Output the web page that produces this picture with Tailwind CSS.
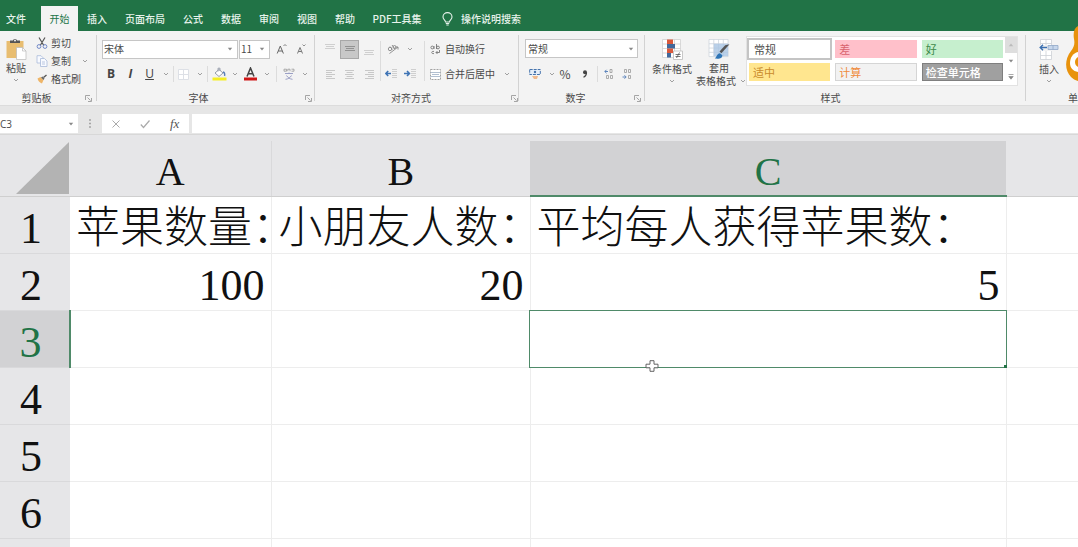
<!DOCTYPE html>
<html lang="zh-CN">
<head>
<meta charset="utf-8">
<meta name="viewport" content="width=device-width, initial-scale=1">
<title>Excel</title>
<script src="https://cdn.jsdelivr.net/npm/@tailwindcss/browser@4"></script>
</head>
<body class="relative flex h-screen flex-col overflow-hidden bg-white font-['Noto_Sans_CJK_SC',sans-serif] text-[10px] leading-[14px] text-[#4a4a4a]">

<svg class="hidden" aria-hidden="true">
  <symbol id="chev" viewBox="0 0 6 4"><path d="M1 1l2 2 2-2" fill="none" stroke="#a0a0a0"/></symbol>
  <symbol id="tri" viewBox="0 0 6 4"><path d="M.8 .8h4.4L3 3.4z" fill="#888"/></symbol>
  <symbol id="launch" viewBox="0 0 7 7"><path d="M.5 5V.5H5M2.500 2.500l3 3M6.500 3v3.500H3" fill="none" stroke="#9c9c9c" stroke-width=".9"/></symbol>
</svg>

<nav class="flex h-[31px] shrink-0 items-end whitespace-nowrap bg-[#217346] font-medium text-[#e8f3ec]" aria-label="功能区选项卡">
  <button class="h-[25px] w-[41px] pr-[9px]">文件</button>
  <button class="h-[25px] w-[37px] bg-[#f3f3f3] font-normal text-[#217346]">开始</button>
  <button class="h-[25px] w-[38px]">插入</button>
  <button class="h-[25px] w-[58px]">页面布局</button>
  <button class="h-[25px] w-[38px]">公式</button>
  <button class="h-[25px] w-[38px]">数据</button>
  <button class="h-[25px] w-[38px]">审阅</button>
  <button class="h-[25px] w-[38px]">视图</button>
  <button class="h-[25px] w-[38px]">帮助</button>
  <button class="h-[25px] w-[66px]">PDF工具集</button>
  <button class="ml-2 flex h-[25px] items-center gap-2 px-1">
    <svg class="h-[14px] w-[11px]" viewBox="0 0 11 14" fill="none" stroke="#e8f3ec" stroke-width="1.100"><path d="M3.500 10C3.500 8 1 7.500 1 4.900a4.500 4.300 0 0 1 9 0C10 7.500 7.500 8 7.500 10zM3.800 11.500h3.400M4.300 13h2.400"/></svg>
    操作说明搜索
  </button>
</nav>

<section class="flex h-[75px] shrink-0 whitespace-nowrap border-b border-[#dcdcdc] bg-[#f3f3f3]" aria-label="功能区">

  <div class="flex w-[96px] shrink-0 flex-col pt-[3px]">
    <div class="flex h-[54px]">
      <button class="flex w-8 flex-col items-center pt-1">
        <svg class="h-[22px] w-[22px]" viewBox="0 0 22 22"><path d="M1.500 3h17v17h-17z" fill="#e8bd70"/><path d="M5 5V2.500h3C8.300.5 11.700.5 12 2.500h3V5z" fill="#555"/><circle cx="10" cy="2.500" r="1" fill="#f3f3f3"/><path d="M11.500 9.500h6l3.500 3.500v8.500h-9.500z" fill="#fff" stroke="#b9b9b9" stroke-width=".7"/><path d="M17.500 9.500V13H21" fill="none" stroke="#b9b9b9" stroke-width=".7"/></svg>
        <span class="mt-px">粘贴</span>
        <svg class="mt-[3px] h-1 w-1.5"><use href="#chev"/></svg>
      </button>
      <div class="flex flex-col pl-1">
        <button class="flex h-[18px] items-center gap-[3px]">
          <svg class="h-3 w-3" viewBox="0 0 12 12" fill="none"><path d="M3 .5l4.800 8M9 .5L4.200 8.500" stroke="#555" stroke-width="1.200"/><circle cx="3" cy="9.500" r="1.900" stroke="#7188c8"/><circle cx="9" cy="9.500" r="1.900" stroke="#7188c8"/></svg>剪切
        </button>
        <button class="flex h-[18px] items-center gap-[3px]">
          <svg class="h-3 w-3" viewBox="0 0 12 12" fill="#f8faff" stroke="#a9bad9" stroke-width=".8"><path d="M1 .7h4l2 2V8H1z"/><path d="M4.500 3.500h4l2.500 2.500v5.500H4.500z"/><path d="M6 7h3M6 9h3"/></svg>复制<svg class="ml-2 h-1 w-1.5"><use href="#chev"/></svg>
        </button>
        <button class="flex h-[19px] items-center gap-[3px]">
          <svg class="h-3 w-3" viewBox="0 0 12 12"><path d="M1.500 5.500l3-1.500 3 3-1.500 3.500C4 10 2 8 1.500 5.500z" fill="#eeb568"/><path d="M5 4.500l1.500-1L8.500 5.500l-1 1.500z" fill="#666"/><path d="M7.500 4.500L10.500 2" stroke="#555" stroke-width="1.300"/></svg>格式刷
        </button>
      </div>
    </div>
    <div class="mt-[3px] flex items-center"><span class="w-[85px] pr-3 text-center">剪贴板</span><button aria-label="剪贴板设置"><svg class="h-[7px] w-[7px]"><use href="#launch"/></svg></button></div>
  </div>

  <div class="my-1 w-px shrink-0 bg-[#d2d2d2]"></div>
  <div class="flex w-[217px] shrink-0 flex-col pl-[5px] pt-2">
    <div class="flex h-5 items-center">
      <div class="flex h-[19px] w-[136px] items-center border border-[#c6c6c6] bg-white pr-1">
        <input aria-label="字体" class="w-full min-w-0 pl-px outline-none" value="宋体"><svg class="h-1 w-1.5 shrink-0"><use href="#tri"/></svg>
      </div>
      <div class="ml-px flex h-[19px] w-[31px] items-center border border-[#c6c6c6] bg-white pr-1">
        <input aria-label="字号" class="w-full min-w-0 pl-px outline-none" value="11"><svg class="h-1 w-1.5 shrink-0"><use href="#tri"/></svg>
      </div>
      <button aria-label="增大字号" class="ml-1.5 w-[14px]"><svg class="h-3 w-3" viewBox="0 0 12 12" fill="none" stroke="#666"><path d="M1.200 10.500L4.300 3l3.100 7.500M2.300 8h4"/><path d="M7.500 3L9 1.500 10.500 3" stroke-width=".8"/></svg></button>
      <button aria-label="减小字号" class="ml-1.5 w-[14px]"><svg class="h-3 w-3" viewBox="0 0 12 12" fill="none" stroke="#777"><path d="M1.500 10.500L4 4.500l2.500 6M2.400 8.500h3.200"/><path d="M6.500 1.500L8 3l1.500-1.500" stroke-width=".8"/></svg></button>
    </div>
    <div class="mt-[5px] flex h-5 items-center text-[12px] text-[#444]">
      <button class="w-[18px] font-['Open_Sans',sans-serif] font-bold">B</button>
      <button class="ml-px w-[19px] font-['Open_Sans',sans-serif] font-bold italic">I</button>
      <button class="w-[19px] font-['Open_Sans',sans-serif] underline">U</button>
      <button aria-label="下划线选项" class="w-[14px]"><svg class="ml-1 h-1 w-1.5"><use href="#chev"/></svg></button>
      <div class="h-4 w-px bg-[#dcdcdc]"></div>
      <button aria-label="边框" class="flex w-[33px] items-center justify-between pl-1 pr-1"><svg class="h-[11px] w-[11px]" viewBox="0 0 11 11"><path d="M.5.5h10v10H.5zM5.500.5v10M.5 5.500h10" fill="#fff" stroke="#dde0e6"/></svg><svg class="h-1 w-1.5"><use href="#chev"/></svg></button>
      <div class="h-4 w-px bg-[#dcdcdc]"></div>
      <button aria-label="填充颜色" class="flex w-[32px] items-center justify-between pl-1 pr-0.5"><svg class="h-[14px] w-[15px]" viewBox="0 0 15 14"><path d="M3 6l4-3.500L11 6 7 9.500z" fill="#fff" stroke="#8b93a3" stroke-width=".9"/><path d="M6 4.500V1.200h2V4" fill="none" stroke="#8b93a3" stroke-width=".8"/><path d="M11 5c2 .5 2 2 1.600 4" fill="none" stroke="#5a7fb8" stroke-width="1.300"/><path d="M.5 10.500h14v3H.5z" fill="#f5ee25"/></svg><svg class="h-1 w-1.5"><use href="#chev"/></svg></button>
      <button aria-label="字体颜色" class="flex w-[32px] items-center justify-between pl-1 pr-0.5"><svg class="h-[14px] w-[13px]" viewBox="0 0 13 14"><path d="M3 9.500L6.500 1 10 9.500M4.200 6.800h4.600" fill="none" stroke="#444" stroke-width="1.500"/><path d="M0 10.500h13v3H0z" fill="#cf1717"/></svg><svg class="h-1 w-1.5"><use href="#chev"/></svg></button>
      <div class="ml-1 h-4 w-px bg-[#dcdcdc]"></div>
      <button aria-label="拼音" class="flex w-[31px] items-center justify-between pl-1.5"><svg class="h-3 w-3" viewBox="0 0 12 12" fill="none"><path d="M1 1.200h2.500v2H1zM4.800 3.200v-2H7v2M8.500 1.200H11v2H8.500" stroke="#999" stroke-width=".8"/><path d="M2 5.500h8M6 4.500v1M3.500 7.500C5 10 7 11 9.500 11.300M8.500 7.500C7 10 5 11 2.500 11.300" stroke="#9ba0c5"/></svg><svg class="h-1 w-1.5"><use href="#chev"/></svg></button>
    </div>
    <div class="mt-[7px] flex items-center"><span class="w-[203px] pr-2.5 text-center">字体</span><button aria-label="字体设置"><svg class="h-[7px] w-[7px]"><use href="#launch"/></svg></button></div>
  </div>

  <div class="my-1 w-px shrink-0 bg-[#d2d2d2]"></div>
  <div class="flex w-[203px] shrink-0 flex-col pt-2">
    <div class="flex h-[45px]">
      <div class="flex flex-col gap-[5px] pl-[5px]">
        <div class="flex h-5 items-center">
          <button aria-label="顶端对齐" class="flex h-[18px] w-5 justify-center pt-1"><svg class="h-2 w-2.5" viewBox="0 0 10 8"><path d="M0 .5h10M1 2.500h8M0 4.500h10" stroke="#cfcfcf"/></svg></button>
          <button aria-label="垂直居中" class="flex h-[19px] w-[19px] items-center justify-center border border-[#a8a8a8] bg-[#c8c8c8]"><svg class="h-2 w-2.5" viewBox="0 0 10 8"><path d="M0 1.500h10M1 3.500h8M0 5.500h10" stroke="#929292"/></svg></button>
          <button aria-label="底端对齐" class="flex h-[18px] w-5 items-end justify-center pb-px"><svg class="h-2 w-2.5" viewBox="0 0 10 8"><path d="M0 1.500h10M1 3.500h8M0 5.500h10" stroke="#cfcfcf"/></svg></button>
        </div>
        <div class="flex h-5 items-center">
          <button aria-label="左对齐" class="flex w-5 justify-center"><svg class="h-[9px] w-[9px]" viewBox="0 0 9 9"><path d="M0 .5h9M0 2.500h6M0 4.500h9M0 6.500h6M0 8.500h9" stroke="#c8c8c8"/></svg></button>
          <button aria-label="居中" class="flex w-[19px] justify-center"><svg class="h-[9px] w-[9px]" viewBox="0 0 9 9"><path d="M0 .5h9M1.500 2.500h6M0 4.500h9M1.500 6.500h6M0 8.500h9" stroke="#c8c8c8"/></svg></button>
          <button aria-label="右对齐" class="flex w-5 justify-center"><svg class="h-[9px] w-[9px]" viewBox="0 0 9 9"><path d="M0 .5h9M3 2.500h6M0 4.500h9M3 6.500h6M0 8.500h9" stroke="#c8c8c8"/></svg></button>
        </div>
      </div>
      <div class="ml-px mt-0.5 h-10 w-px bg-[#dcdcdc]"></div>
      <div class="flex w-[43px] flex-col gap-[5px] pl-1">
        <button aria-label="方向" class="flex h-5 items-center gap-2 pl-0.5"><svg class="h-3 w-3 shrink-0" viewBox="0 0 12 12" fill="none" stroke="#888" stroke-width=".9"><circle cx="3" cy="6" r="1.700"/><path d="M3 3.500l2.500 3M5 2l3 4"/><circle cx="7.500" cy="4" r="1.500"/><path d="M2.500 10.500L11 4M11 6.500V4H8.500"/></svg><svg class="h-1 w-1.5"><use href="#chev"/></svg></button>
        <div class="flex h-5 items-center gap-[7px]">
          <button aria-label="减少缩进"><svg class="block h-2.5 w-3" viewBox="0 0 12 10"><path d="M7 .5h5M7 2.500h5M7 4.500h5M7 6.500h5M7 8.500h5" stroke="#cfcfcf"/><path d="M6 4.500H1M3.200 2L.8 4.500 3.200 7" fill="none" stroke="#3f74b5" stroke-width="1.600"/></svg></button>
          <button aria-label="增加缩进"><svg class="block h-2.5 w-3" viewBox="0 0 12 10"><path d="M7 .5h5M7 2.500h5M7 4.500h5M7 6.500h5M7 8.500h5" stroke="#cfcfcf"/><path d="M0 4.500h5M3 2l2.400 2.500L3 7" fill="none" stroke="#3f74b5" stroke-width="1.600"/></svg></button>
        </div>
      </div>
      <div class="mt-0.5 h-10 w-px bg-[#dcdcdc]"></div>
      <div class="flex flex-col gap-[5px] pl-[5px]">
        <button class="flex h-5 items-center gap-1"><svg class="h-[11px] w-[11px]" viewBox="0 0 11 11" fill="none" stroke="#777" stroke-width=".9"><circle cx="2.300" cy="3.500" r="1.400"/><path d="M4 2v3M6.500 0v5"/><circle cx="8" cy="3.500" r="1.400"/><path d="M4 7.500C1 6.500 1 10.500 4 9.500M9.500 6v2.500H6M7.500 7L6 8.500 7.500 10"/></svg>自动换行</button>
        <button class="flex h-5 items-center gap-1"><svg class="h-[11px] w-[11px]" viewBox="0 0 11 11" fill="#fff" stroke="#999" stroke-width=".9"><path d="M.5.5h10v10H.5z" stroke-dasharray="2 1"/><path d="M.5 3.500h10M.5 7.500h10M2 5.500h7" stroke="#a9b9cc"/></svg>合并后居中<svg class="ml-[5px] h-1 w-1.5"><use href="#chev"/></svg></button>
      </div>
    </div>
    <div class="mt-[7px] flex items-center"><span class="w-[196px] pr-1 text-center">对齐方式</span><button aria-label="对齐设置"><svg class="h-[7px] w-[7px]"><use href="#launch"/></svg></button></div>
  </div>

  <div class="my-1 w-px shrink-0 bg-[#d2d2d2]"></div>
  <div class="flex w-[125px] shrink-0 flex-col pl-1.5 pt-2">
    <div class="relative h-5 w-[113px]">
      <select aria-label="数字格式" class="h-[19px] w-full appearance-none border border-[#c6c6c6] bg-white pl-0.5"><option>常规</option></select>
      <svg class="pointer-events-none absolute right-1 top-2 h-1 w-1.5"><use href="#tri"/></svg>
    </div>
    <div class="mt-[5px] flex h-5 items-center">
      <button aria-label="会计数字格式" class="flex w-[30px] items-center gap-2 pl-1"><svg class="h-3 w-3 shrink-0" viewBox="0 0 12 12"><path d="M.7 1.500h10.600v5H.7z" fill="#e5eef9" stroke="#4774ad" stroke-dasharray="3 1"/><circle cx="6" cy="4" r="1.200" fill="#4774ad"/><path d="M3 8h6l-1 3H5z" fill="#efb98e"/></svg><svg class="h-1 w-1.5 shrink-0"><use href="#chev"/></svg></button>
      <button class="w-5 text-[12px]">%</button>
      <button aria-label="千位分隔样式" class="flex w-5 justify-center"><svg class="h-2 w-1.5" viewBox="0 0 6 8"><circle cx="3" cy="2.200" r="2" fill="#444"/><path d="M4.500 2.500C4.500 5 3.500 6.500 1.500 7.300" fill="none" stroke="#444" stroke-width="1.200"/></svg></button>
      <div class="ml-0.5 h-4 w-px bg-[#dcdcdc]"></div>
      <button aria-label="增加小数位数" class="w-5 pl-1.5"><svg class="h-2.5 w-2.5" viewBox="0 0 10 10" fill="none" stroke="#999"><path d="M4 2.500H.8M2.500.8L.8 2.500 2.500 4.200" stroke="#5f86bd"/><path d="M6 .5h2v3H6zM2.500 6.500h2v3h-2zM6.500 6.500h2v3h-2z" stroke-width=".8"/></svg></button>
      <button aria-label="减少小数位数" class="w-5 pl-1"><svg class="h-2.5 w-2.5" viewBox="0 0 10 10" fill="none" stroke="#999"><path d="M2.500.5h2v3h-2zM6.500.5h2v3h-2zM6.500 6.500h2v3h-2z" stroke-width=".8"/><path d="M.5 8H4M2.500 6.300L4.200 8 2.500 9.700" stroke="#5f86bd"/></svg></button>
    </div>
    <div class="mt-[7px] flex items-center"><span class="w-[109px] pr-2 text-center">数字</span><button aria-label="数字设置"><svg class="h-[7px] w-[7px]"><use href="#launch"/></svg></button></div>
  </div>

  <div class="my-1 w-px shrink-0 bg-[#d2d2d2]"></div>
  <div class="flex w-[380px] shrink-0 flex-col pl-[7px] pt-[5px]">
    <div class="flex h-[51px]">
      <button class="flex w-10 flex-col items-center pt-[3px]">
        <svg class="h-[21px] w-[21px]" viewBox="0 0 21 21"><path d="M.5.5h18v18H.5zM.5 5h18M.5 9.500h18M.5 14h18M6.500.5v18M12.500.5v18" fill="#fff" stroke="#d0d0d0" stroke-width=".8"/><path d="M5 .5h6v4.500H5z" fill="#d9593c"/><path d="M5 5h8v4.500H5z" fill="#41699c"/><path d="M5 9.500h6v4.500H5z" fill="#d9593c"/><path d="M5 14h4v4.500H5z" fill="#41699c"/><path d="M11.500 12h9v8.500h-9z" fill="#fff" stroke="#bbb" stroke-width=".8"/><path d="M13.500 15.500h5M13.500 17.500h5M17.500 13.500l-3 5.500" stroke="#555" stroke-width=".8"/></svg>
        <span class="mt-0.5">条件格式</span>
        <svg class="mt-[3px] h-1 w-1.5"><use href="#chev"/></svg>
      </button>
      <button class="flex w-[54px] flex-col items-center pt-[3px]">
        <svg class="h-[21px] w-[23px]" viewBox="0 0 23 21"><path d="M.5.5h20v18H.5zM.5 5h20M.5 9.500h20M.5 14h20M5.500.5v18M10.500.5v18M15.500.5v18" fill="#fff" stroke="#ccd3dc" stroke-width=".8"/><path d="M5.500 5h15v13h-15z" fill="#a9c4e2" opacity=".8"/><path d="M22 5.500L13.500 15l-2-1.800 6-6.700z" fill="#555"/><path d="M6.500 20.500c2-1 2-5 5.500-5.500l2.500 2c0 3-2 4-8 3.500z" fill="#2e75b6"/></svg>
        <span class="mt-0.5 leading-[13px]">套用<br><span class="flex items-center gap-1 pl-1">表格格式<svg class="h-1 w-1.5"><use href="#chev"/></svg></span></span>
      </button>
      <div class="flex h-[50px] w-[272px] border border-[#e2e2e2] bg-white text-[11px]">
        <div class="grid flex-1 grid-cols-3 gap-x-[5px] gap-y-[5px] pt-[3px] pr-0.5 pb-1 pl-0.5">
          <button class="border border-white bg-white pl-1 text-left outline-2 outline-[#c4c4c4]">常规</button>
          <button class="bg-[#ffc0ca] pl-1 text-left text-[#d8646e]">差</button>
          <button class="bg-[#c6efce] pl-1 text-left text-[#3f8a4b]">好</button>
          <button class="bg-[#ffe68f] pl-1 text-left text-[#c98a2b]">适中</button>
          <button class="border border-[#d5d5d5] bg-[#f2f2f2] pl-[3px] text-left text-[#ef8a3c]">计算</button>
          <button class="border border-[#7f7f7f] bg-[#a0a0a0] pl-[3px] text-left font-medium text-white">检查单元格</button>
        </div>
        <div class="flex w-3 flex-col">
          <button aria-label="上一行" class="flex flex-1 items-center justify-center bg-[#dedede]"><svg class="h-1 w-1.5 rotate-180 opacity-40"><use href="#tri"/></svg></button>
          <button aria-label="下一行" class="flex flex-1 items-center justify-center"><svg class="h-1 w-1.5"><use href="#tri"/></svg></button>
          <button aria-label="其他样式" class="flex flex-1 items-center justify-center"><svg class="h-1.5 w-1.5" viewBox="0 0 6 6"><path d="M.5.5h5M.8 2.500h4.400L3 5.200z" fill="#888" stroke="#888" stroke-width=".7"/></svg></button>
        </div>
      </div>
    </div>
    <div class="mt-[4px] pr-4 text-center">样式</div>
  </div>

  <div class="my-1 w-px shrink-0 bg-[#d2d2d2]"></div>
  <div class="flex min-w-0 flex-1 flex-col overflow-hidden pt-[5px]">
    <button class="flex h-[51px] w-[46px] flex-col items-center pt-[3px]">
      <svg class="h-[21px] w-5" viewBox="0 0 20 21"><path d="M1.500.5h11v20h-11zM7 .5v20M1.500 4.500h11M1.500 16.500h11" fill="#fff" stroke="#cdd1d6" stroke-width=".8"/><path d="M0 6h20v6H0z" fill="#f3f3f3"/><path d="M9 6.500h10v4H9zM14 6.500v4" fill="#c7d7ec" stroke="#8fa6c7" stroke-width=".8"/><path d="M8 8.500H1.500M4 5.800L1.200 8.500 4 11.200" fill="none" stroke="#3b6fb0" stroke-width="1.400"/></svg>
      <span class="mt-0.5">插入</span>
      <svg class="mt-[3px] h-1 w-1.5"><use href="#chev"/></svg>
    </button>
    <div class="mt-[4px] pl-[42px]">单元格</div>
  </div>
</section>

<section class="flex h-[29px] shrink-0 items-center border-b border-[#d8d8d8] bg-[#e6e6e6] pt-2 pb-px" aria-label="编辑栏">
  <div class="flex h-full w-[78px] items-center bg-white pr-1">
    <input aria-label="名称框" class="w-full min-w-0 font-['Open_Sans',sans-serif] outline-none" value="C3"><svg class="h-1 w-1.5 shrink-0"><use href="#tri"/></svg>
  </div>
  <svg class="ml-[11px] h-2.5 w-0.5" viewBox="0 0 2 10"><path d="M0 1h2M0 4.500h2M0 8h2" stroke="#a5a5a5" stroke-width="1.300"/></svg>
  <div class="ml-[11px] flex h-full w-[87px] items-center bg-white pl-[9px]">
    <button aria-label="取消" class="w-[29px]"><svg class="h-2.5 w-2.5" viewBox="0 0 10 10"><path d="M1.500 1.500l7 7M8.500 1.500l-7 7" stroke="#aaa"/></svg></button>
    <button aria-label="输入" class="w-[30px]"><svg class="h-2.5 w-2.5" viewBox="0 0 10 10"><path d="M.8 5.500L3.500 8.500 9.500 1.500" fill="none" stroke="#aaa" stroke-width="1.200"/></svg></button>
    <button class="font-['Liberation_Serif',serif] text-[13px] italic text-[#555]">fx</button>
  </div>
  <input aria-label="公式" class="ml-[3px] h-full min-w-0 flex-1 bg-white px-2 outline-none">
</section>

<main class="min-h-0 flex-1 overflow-hidden bg-[#e6e6e8] pt-[6px]">
  <table class="w-full table-fixed border-collapse whitespace-nowrap bg-white font-['Liberation_Serif','Noto_Sans_CJK_SC',serif] text-[44px] leading-[46px] text-[#111]">
    <colgroup><col class="w-[70px]"><col class="w-[201px]"><col class="w-[259px]"><col class="w-[476px]"><col></colgroup>
    <thead>
      <tr class="h-[55px] bg-[#e6e6e8] text-[40px]">
        <th class="border-b border-[#cfcfcf] p-0" aria-label="全选"><svg class="ml-4 block h-[52px] w-[53px]" viewBox="0 0 53 52"><path d="M53 0v52H0z" fill="#b3b3b3"/></svg></th>
        <th class="border-b border-r border-b-[#cfcfcf] border-r-[#d9d9db] p-0 pt-2 font-normal" scope="col">A</th>
        <th class="border-b border-[#cfcfcf] p-0 pt-2 font-normal" scope="col">B</th>
        <th class="border-b-2 border-[#4f8a69] bg-[#d2d2d4] p-0 pt-2 font-normal text-[#217346]" scope="col">C</th>
        <th class="border-b border-[#cfcfcf] p-0" scope="col"></th>
      </tr>
    </thead>
    <tbody>
      <tr class="h-[57px]">
        <th class="border-b border-[#d9d9db] bg-[#e6e6e8] p-0 pr-2 pt-2 font-normal" scope="row">1</th>
        <td class="border-b border-r border-[#ededed] p-0 pl-1.5 pt-2 font-light">苹果数量：</td>
        <td class="border-b border-r border-[#ededed] p-0 pl-[7px] pt-2 font-light">小朋友人数：</td>
        <td class="border-b border-r border-[#ededed] p-0 pl-1.5 pt-2 font-light">平均每人获得苹果数：</td>
        <td class="border-b border-[#ededed] p-0"></td>
      </tr>
      <tr class="h-[57px]">
        <th class="border-b border-[#d9d9db] bg-[#e6e6e8] p-0 pr-2 pt-2 font-normal" scope="row">2</th>
        <td class="border-b border-r border-[#ededed] p-0 pr-1.5 pt-2 text-right">100</td>
        <td class="border-b border-r border-[#ededed] p-0 pr-1.5 pt-2 text-right">20</td>
        <td class="border-b border-r border-[#ededed] p-0 pr-1.5 pt-2 text-right">5</td>
        <td class="border-b border-[#ededed] p-0"></td>
      </tr>
      <tr class="h-[57px]">
        <th class="border-b border-r-2 border-b-[#d9d9db] border-r-[#4f8a69] bg-[#d2d2d4] p-0 pr-2 pt-2 font-normal text-[#217346]" scope="row">3</th>
        <td class="border-b border-r border-[#ededed] p-0"></td>
        <td class="border-b border-[#ededed] p-0"></td>
        <td class="relative border-b border-[#ededed] p-0">
          <div class="absolute -inset-px border border-[#4f8a69]"><span class="absolute -bottom-px -right-px h-[3px] w-[3px] bg-[#217346]"></span></div>
          <svg class="absolute left-[115px] top-[49px] h-3 w-[14px]" viewBox="0 0 14 12"><path d="M5 .7h4v3.500h4v3.600H9v3.500H5V7.800H1V4.200h4z" fill="#fff" stroke="#555" stroke-width=".9"/></svg>
        </td>
        <td class="border-b border-[#ededed] p-0"></td>
      </tr>
      <tr class="h-[57px]">
        <th class="border-b border-[#d9d9db] bg-[#e6e6e8] p-0 pr-2 pt-2 font-normal" scope="row">4</th>
        <td class="border-b border-r border-[#ededed] p-0"></td><td class="border-b border-r border-[#ededed] p-0"></td><td class="border-b border-r border-[#ededed] p-0"></td><td class="border-b border-[#ededed] p-0"></td>
      </tr>
      <tr class="h-[57px]">
        <th class="border-b border-[#d9d9db] bg-[#e6e6e8] p-0 pr-2 pt-2 font-normal" scope="row">5</th>
        <td class="border-b border-r border-[#ededed] p-0"></td><td class="border-b border-r border-[#ededed] p-0"></td><td class="border-b border-r border-[#ededed] p-0"></td><td class="border-b border-[#ededed] p-0"></td>
      </tr>
      <tr class="h-[57px]">
        <th class="border-b border-[#d9d9db] bg-[#e6e6e8] p-0 pr-2 pt-2 font-normal" scope="row">6</th>
        <td class="border-b border-r border-[#ededed] p-0"></td><td class="border-b border-r border-[#ededed] p-0"></td><td class="border-b border-r border-[#ededed] p-0"></td><td class="border-b border-[#ededed] p-0"></td>
      </tr>
      <tr class="h-[57px]">
        <th class="bg-[#e6e6e8] p-0" scope="row"></th>
        <td class="border-r border-[#ededed] p-0"></td><td class="border-r border-[#ededed] p-0"></td><td class="border-r border-[#ededed] p-0"></td><td class="p-0"></td>
      </tr>
    </tbody>
  </table>
</main>

<svg class="absolute right-0 top-[25px] h-[58px] w-3" viewBox="0 0 12 58" aria-hidden="true"><path d="M12 1C8 3 7 8 8 14c1 5 0 8-3 12-7 9-6 20 0 26 2 2 4 3 7 4z" fill="#e8920c"/><path d="M12 27c-5 1-8 6-8 11s3 8 8 9z" fill="#fff"/><path d="M12 32c-2 1-3 3-3 5s1 4 3 5z" fill="#e8920c"/></svg>
</body>
</html>
